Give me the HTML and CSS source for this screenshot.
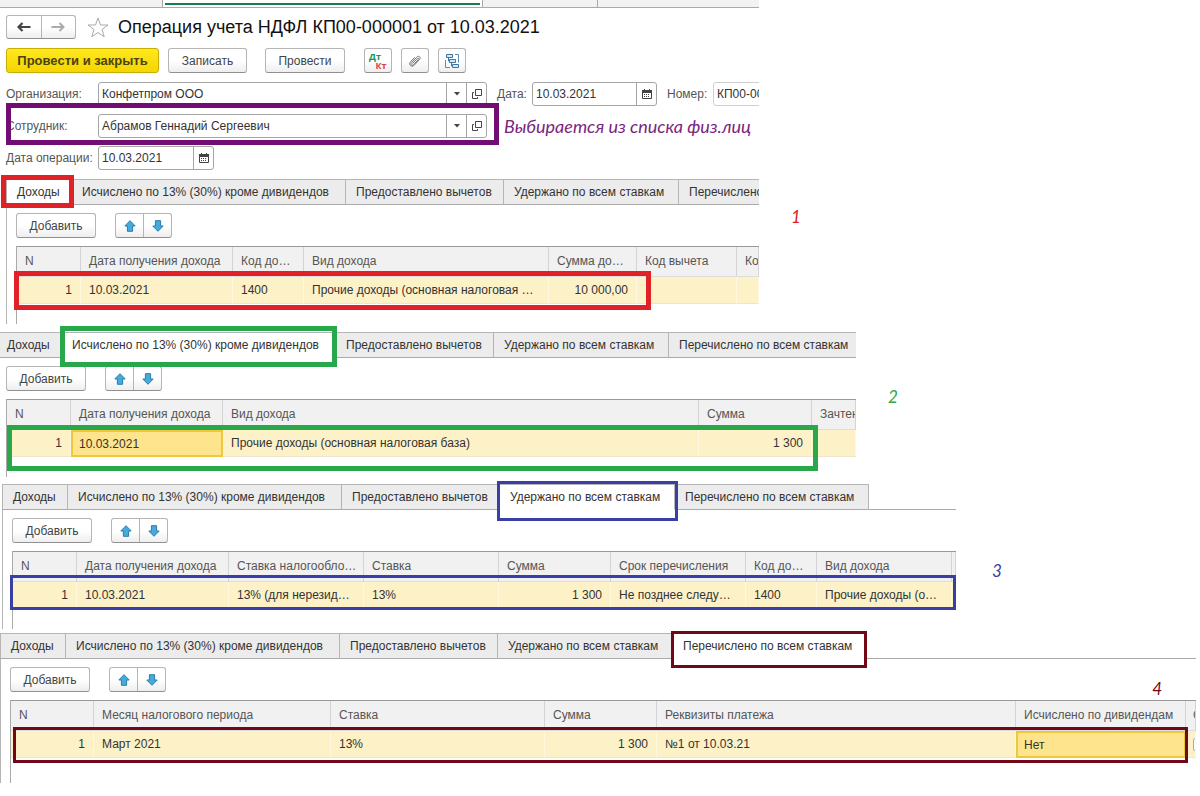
FILE: index.html
```html
<!DOCTYPE html>
<html lang="ru">
<head>
<meta charset="utf-8">
<title>Операция учета НДФЛ</title>
<link rel="stylesheet" href="styles.css">
</head>
<body>
<svg class="sprite" aria-hidden="true">
  <symbol id="up" viewBox="0 0 12 12"><path d="M6 .7 11.2 6H8.6v5.3H3.4V6H.8z" fill="#45abdf" stroke="#2b7ca8"/></symbol>
  <symbol id="down" viewBox="0 0 12 12"><path d="M6 11.3.8 6h2.6V.7h5.2V6h2.6z" fill="#45abdf" stroke="#2b7ca8"/></symbol>
  <symbol id="caret" viewBox="0 0 6 4"><path d="M0 0h6L3 3.5z" fill="#444"/></symbol>
  <symbol id="open" viewBox="0 0 10 10"><path d="M3.5.5h6v6h-6zM2 3.5H.5v6h5V8" fill="none" stroke="#444"/></symbol>
  <symbol id="cal" viewBox="0 0 10 10"><path d="M.5 1.5h9v8h-9z" fill="#fff" stroke="#444"/><path d="M0 1h10v3H0zM2 0h1v1H2zM7 0h1v1H7z" fill="#444"/><path d="M2 5h1v1H2zm2 0h1v1H4zm2 0h1v1H6zM2 7h1v1H2zm2 0h1v1H4zm2 0h1v1H6z" fill="#444"/></symbol>
</svg>

<header class="window">
  <div class="window-tabs"><span class="wt wt-first"></span><span class="wt wt-active"></span><span class="wt wt-next"></span><span class="wt wt-rest"></span></div>
  <div class="title-row">
    <div class="pair nav">
      <button type="button" aria-label="Назад"><svg width="14" height="10" viewBox="0 0 14 10"><path d="M5.5 1 1.5 5l4 4M2 5h11.500" fill="none" stroke="#444" stroke-width="2.200"/></svg></button>
      <button type="button" aria-label="Вперед"><svg width="14" height="10" viewBox="0 0 14 10"><path d="M8.500 1l4 4-4 4M12 5H.5" fill="none" stroke="#aaa" stroke-width="2"/></svg></button>
    </div>
    <svg class="star" width="22" height="21" viewBox="0 0 22 21"><path d="M11 1l2.500 7H21l-6 4.500 2.200 7.300L11 15.500l-6.200 4.300L7 12.500 1 8h7.500z" fill="#fff" stroke="#aaa"/></svg>
    <h1>Операция учета НДФЛ КП00-000001 от 10.03.2021</h1>
  </div>
  <div class="commands">
    <button type="button" class="btn primary">Провести и закрыть</button>
    <button type="button" class="btn save">Записать</button>
    <button type="button" class="btn post">Провести</button>
    <button type="button" class="btn square dtkt" aria-label="Дт Кт"><span class="dt">Дт</span><span class="kt">Кт</span></button>
    <button type="button" class="btn square" aria-label="Вложения"><svg width="14" height="14" viewBox="0 0 14 14"><path d="M4.500 9.500 9.300 4.500c.9-.9 1.900 0 1 1L5.600 10.600C4 12.200 2 10.300 3.500 8.700L8.600 3.200C10.800 1 13.400 3.300 11.500 5.500L6.300 11.200C3.800 13.700.2 10.800 2.300 8.100L6.600 3.400" fill="none" stroke="#777"/></svg></button>
    <button type="button" class="btn square" aria-label="Структура"><svg width="14" height="14" viewBox="0 0 14 14"><path d="M1.500.5h6v3h-6zM4.500 5.500h6v3h-6zM7.500 10.500h6v3h-6zM3.500 3.500V7h1M6.500 8.500V12h1" fill="#d5e8f4" stroke="#3a76a5"/><path d="M10 .5h3.500v8M.5 6v7.500H5" fill="none" stroke="#5b8db3"/></svg></button>
  </div>
  <div class="field-row">
    <label for="org">Организация:</label>
    <div class="field wide"><input id="org" value="Конфетпром ООО"><button type="button" aria-label="Список"><svg width="6" height="4"><use href="#caret"/></svg></button><button type="button" aria-label="Открыть"><svg width="10" height="10"><use href="#open"/></svg></button></div>
    <label class="inline date-label" for="date">Дата:</label>
    <div class="field date"><input id="date" value="10.03.2021"><button type="button" aria-label="Календарь"><svg width="10" height="10"><use href="#cal"/></svg></button></div>
    <label class="inline num-label" for="num">Номер:</label>
    <div class="field number"><input id="num" value="КП00-000001"></div>
  </div>
  <div class="field-row">
    <label for="emp">Сотрудник:</label>
    <div class="field wide"><input id="emp" value="Абрамов Геннадий Сергеевич"><button type="button" aria-label="Список"><svg width="6" height="4"><use href="#caret"/></svg></button><button type="button" aria-label="Открыть"><svg width="10" height="10"><use href="#open"/></svg></button></div>
    <span class="remark">Выбирается из списка физ.лиц</span>
    <span class="mark mark-employee"></span>
  </div>
  <div class="field-row">
    <label for="opdate">Дата операции:</label>
    <div class="field opdate"><input id="opdate" value="10.03.2021"><button type="button" aria-label="Календарь"><svg width="10" height="10"><use href="#cal"/></svg></button></div>
  </div>
</header>

<section class="step red">
  <div class="shot shot-1"><div class="panel">
    <div class="tabs" role="tablist">
      <button type="button" role="tab" class="active t1">Доходы</button><button type="button" role="tab" class="t2">Исчислено по 13% (30%) кроме дивидендов</button><button type="button" role="tab" class="t3">Предоставлено вычетов</button><button type="button" role="tab" class="t4">Удержано по всем ставкам</button><button type="button" role="tab" class="t5">Перечислено по всем ставкам</button>
    </div>
    <div class="content">
      <div class="tools"><button type="button" class="btn add">Добавить</button><div class="pair"><button type="button" aria-label="Вверх"><svg width="12" height="12"><use href="#up"/></svg></button><button type="button" aria-label="Вниз"><svg width="12" height="12"><use href="#down"/></svg></button></div></div>
      <div class="grid">
        <table>
          <colgroup><col class="w64"><col class="w152"><col class="w71"><col class="w245"><col class="w88"><col class="w100"><col></colgroup>
          <thead><tr><th>N</th><th>Дата получения дохода</th><th>Код до…</th><th>Вид дохода</th><th>Сумма до…</th><th>Код вычета</th><th class="cut">Код</th></tr></thead>
          <tbody><tr><td class="num">1</td><td>10.03.2021</td><td>1400</td><td>Прочие доходы (основная налоговая …</td><td class="num">10 000,00</td><td></td><td></td></tr></tbody>
        </table>
        <span class="mark mark-row"></span>
      </div>
    </div>
  </div></div>
  <span class="note">1</span>
</section>

<section class="step green">
  <div class="shot shot-2"><div class="panel">
    <div class="tabs" role="tablist">
      <button type="button" role="tab" class="t1">Доходы</button><button type="button" role="tab" class="active t2">Исчислено по 13% (30%) кроме дивидендов</button><button type="button" role="tab" class="t3">Предоставлено вычетов</button><button type="button" role="tab" class="t4">Удержано по всем ставкам</button><button type="button" role="tab" class="t5">Перечислено по всем ставкам</button>
    </div>
    <div class="content">
      <div class="tools"><button type="button" class="btn add">Добавить</button><div class="pair"><button type="button" aria-label="Вверх"><svg width="12" height="12"><use href="#up"/></svg></button><button type="button" aria-label="Вниз"><svg width="12" height="12"><use href="#down"/></svg></button></div></div>
      <div class="grid">
        <table>
          <colgroup><col class="w64"><col class="w152"><col class="w476"><col class="w113"><col></colgroup>
          <thead><tr><th>N</th><th>Дата получения дохода</th><th>Вид дохода</th><th>Сумма</th><th class="cut">Зачтено</th></tr></thead>
          <tbody><tr><td class="num">1</td><td class="current">10.03.2021</td><td>Прочие доходы (основная налоговая база)</td><td class="num">1 300</td><td></td></tr></tbody>
        </table>
        <span class="mark mark-row"></span>
      </div>
    </div>
  </div></div>
  <span class="note">2</span>
</section>

<section class="step blue">
  <div class="shot shot-3"><div class="panel">
    <div class="tabs" role="tablist">
      <button type="button" role="tab" class="t1">Доходы</button><button type="button" role="tab" class="t2">Исчислено по 13% (30%) кроме дивидендов</button><button type="button" role="tab" class="t3">Предоставлено вычетов</button><button type="button" role="tab" class="active t4">Удержано по всем ставкам</button><button type="button" role="tab" class="t5">Перечислено по всем ставкам</button>
    </div>
    <div class="content">
      <div class="tools"><button type="button" class="btn add">Добавить</button><div class="pair"><button type="button" aria-label="Вверх"><svg width="12" height="12"><use href="#up"/></svg></button><button type="button" aria-label="Вниз"><svg width="12" height="12"><use href="#down"/></svg></button></div></div>
      <div class="grid">
        <table>
          <colgroup><col class="w64"><col class="w152"><col class="w135"><col class="w135"><col class="w112"><col class="w135"><col class="w71"><col class="w135"><col></colgroup>
          <thead><tr><th>N</th><th>Дата получения дохода</th><th>Ставка налогообло…</th><th>Ставка</th><th>Сумма</th><th>Срок перечисления</th><th>Код до…</th><th>Вид дохода</th><th></th></tr></thead>
          <tbody><tr><td class="num">1</td><td>10.03.2021</td><td>13% (для нерезид…</td><td>13%</td><td class="num">1 300</td><td>Не позднее следу…</td><td>1400</td><td>Прочие доходы (о…</td><td></td></tr></tbody>
        </table>
        <span class="mark mark-row"></span>
      </div>
    </div>
  </div></div>
  <span class="note">3</span>
</section>

<section class="step maroon">
  <div class="shot shot-4"><div class="panel">
    <div class="tabs" role="tablist">
      <button type="button" role="tab" class="t1">Доходы</button><button type="button" role="tab" class="t2">Исчислено по 13% (30%) кроме дивидендов</button><button type="button" role="tab" class="t3">Предоставлено вычетов</button><button type="button" role="tab" class="t4">Удержано по всем ставкам</button><button type="button" role="tab" class="active t5">Перечислено по всем ставкам</button>
    </div>
    <div class="content">
      <div class="tools"><button type="button" class="btn add">Добавить</button><div class="pair"><button type="button" aria-label="Вверх"><svg width="12" height="12"><use href="#up"/></svg></button><button type="button" aria-label="Вниз"><svg width="12" height="12"><use href="#down"/></svg></button></div><span class="note">4</span></div>
      <div class="grid">
        <table>
          <colgroup><col class="w83"><col class="w237"><col class="w214"><col class="w112"><col class="w359"><col class="w170"><col></colgroup>
          <thead><tr><th>N</th><th>Месяц налогового периода</th><th>Ставка</th><th>Сумма</th><th>Реквизиты платежа</th><th>Исчислено по дивидендам</th><th class="cut">С</th></tr></thead>
          <tbody><tr><td class="num">1</td><td>Март 2021</td><td>13%</td><td class="num">1 300</td><td>№1 от 10.03.21</td><td class="current">Нет</td><td class="cut"><input type="checkbox" class="check" aria-label="С"></td></tr></tbody>
        </table>
        <span class="mark mark-row"></span>
      </div>
    </div>
  </div></div>
</section>
</body>
</html>
```
FILE: styles.css
```css
* { box-sizing: border-box; }

body {
  margin: 0;
  background: #fff;
  color: #333;
  font: 12px/16px "Liberation Sans", Arial, sans-serif;
}

button, input { font: inherit; color: inherit; }
.sprite { position: absolute; width: 0; height: 0; }

/* window header */
.window {
  max-width: 759px;
  padding-bottom: 9px;
  overflow-x: clip;
  display: flex;
  flex-direction: column;
}
.window-tabs { display: flex; height: 8px; flex: none; }
.wt { background: #f2f2f2; border-bottom: 1px solid #aaa; border-right: 1px solid #aaa; }
.wt-first { flex: 0 0 163px; }
.wt-active { flex: 0 0 320px; background: #fff; padding: 3px 2px 0; }
.wt-active::before { content: ""; display: block; height: 2px; background: #15804e; }
.wt-next { flex: 0 0 115px; }
.wt-rest { flex: 1; border-right: 0; }

.title-row { display: flex; align-items: center; padding: 7px 0 0 6px; height: 31px; flex: none; }
.star { margin: 0 9px 0 11px; flex: none; }
h1 { margin: 0; font-size: 18px; line-height: 24px; font-weight: 400; color: #111; white-space: nowrap; }

.btn, .pair {
  height: 25px;
  border: 1px solid #b5b5b5;
  border-bottom-color: #909090;
  border-radius: 3px;
  background: linear-gradient(#fff 50%, #eee);
  color: #444;
}
.btn { padding: 0; flex: none; }
.pair { display: flex; width: 57px; flex: none; }
.pair button { flex: 1; padding: 0; border: 0; background: none; display: flex; align-items: center; justify-content: center; }
.pair button + button { border-left: 1px solid #b5b5b5; }
.nav { width: 70px; height: 24px; }

.commands { display: flex; padding: 9px 0 0 6px; gap: 9px; flex: none; }
.primary { width: 153px; font-size: 13px; font-weight: 700; background: linear-gradient(#ffe81f, #f4d500); border-color: #c9ad00; color: #4b4310; }
.save { width: 79px; margin-right: 9px; }
.post { width: 80px; margin-right: 10px; }
.square { width: 28px; display: flex; align-items: center; justify-content: center; }
.dtkt { flex-direction: column; font: 700 9px/9px "Open Sans", sans-serif; }
.dt { color: #18935a; margin-right: 6px; }
.kt { color: #d8404a; margin-left: 6px; }

.field-row { position: relative; display: flex; align-items: center; height: 24px; margin-top: 8px; padding-left: 6px; flex: none; }
.commands + .field-row { margin-top: 9px; }
.field-row label { flex: 0 0 92px; color: #555; white-space: nowrap; }
.field-row .inline { flex: none; }
.field-row .date-label { width: 35px; margin-left: 10px; }
.field-row .num-label { width: 46px; margin-left: 10px; }
.field { display: flex; height: 24px; border: 1px solid #a5a5a5; border-radius: 3px; overflow: hidden; flex: none; }
.field input { flex: 1; min-width: 0; border: 0; padding: 0 3px; background: none; outline: 0; }
.field button { width: 20px; padding: 0; border: 0; border-left: 1px solid #a5a5a5; background: none; display: flex; align-items: center; justify-content: center; }
.wide { width: 389px; }
.date { width: 125px; }
.opdate { width: 116px; }
.number { width: 100px; border-color: #d0d0d0; }
.remark { margin-left: 17px; color: #7a2580; font: italic 18px/22px Lato, sans-serif; white-space: nowrap; }

/* coloured frames drawn over the forms */
.mark, .tabs .active::after { position: absolute; border: 5px solid var(--ink); pointer-events: none; }
.mark-employee { --ink: #720e73; left: 6px; top: -11px; width: 493px; height: 42px; }

/* steps */
.step { display: flex; margin-bottom: 8px; }
.red { --ink: #e02127; }
.green { --ink: #28a84a; margin-bottom: 7px; }
.blue { --ink: #3a3fa6; margin-bottom: 4px; }
.maroon { --ink: #710817; margin-bottom: 0; }
.note { color: var(--ink); font: italic 17px/22px Lato, sans-serif; }
.red > .note { margin: 27px 0 0 32px; }
.green > .note { margin: 54px 0 0 32px; }
.blue > .note { margin: 76px 0 0 36px; }
.tools .note { margin: 11px 34px 0 auto; }

.shot { overflow-x: clip; min-width: 0; }
.shot-1 { flex: 0 1 759px; padding-left: 6px; }
.shot-2 { flex: 0 1 856px; }
.shot-2 .panel { margin-left: -4px; }
.shot-3 { flex: 0 1 956px; padding-left: 2px; }
.shot-4 { flex: 0 1 1196px; }

.tabs { display: flex; height: 26px; border-bottom: 1px solid #aaa; }
.tabs button {
  position: relative;
  flex: none;
  height: 26px;
  padding: 0 0 0 10px;
  border: 1px solid #b5b5b5;
  border-left-width: 0;
  border-bottom-color: #aaa;
  background: #ececec;
  text-align: left;
  white-space: nowrap;
}
.tabs button:first-child { border-left-width: 1px; }
.t1 { width: 66px; }
.t2 { width: 274px; }
.t3 { width: 158px; }
.t4 { width: 175px; }
.t5 { width: 194px; }
.tabs .active { background: #fff; border-bottom-color: #fff; z-index: 1; }
.tabs .active::after { content: ""; inset: -5px -3px -4px -6px; }
.green .active::after { inset: -7px -2px -10px -2px; }
.blue .active::after { inset: -4px -4px -12px -3px; border-width: 3px; }
.maroon .active::after { inset: -3px -1px -10px -2px; border-width: 3px; }

.content { border-left: 1px solid #b5b5b5; padding: 8px 0 0 9px; }
.tools { display: flex; gap: 19px; height: 25px; }
.add { width: 80px; }

.grid { position: relative; margin-top: 8px; padding-bottom: 20px; border-left: 1px solid #aaa; }
.maroon .grid { padding-bottom: 25px; }
table { width: 100%; table-layout: fixed; border-collapse: separate; border-spacing: 0; border-top: 1px solid #999; }
th, td { padding: 0 4px 0 8px; text-align: left; font-weight: 400; overflow: hidden; text-overflow: ellipsis; white-space: nowrap; }
th { height: 30px; padding-bottom: 1px; background: #f1f1f1; color: #555; border-right: 1px solid #d4d4d4; border-bottom: 1px solid #ddd; }
td { height: 27px; background: #fdf1c8; border-right: 1px solid #fff8df; border-bottom: 1px solid #eee6cc; }
td.num { text-align: right; padding-right: 8px; }
th.cut, td.cut { text-overflow: clip; padding-right: 0; }
.maroon .cut { padding-left: 7px; }
td.current { background: #fee48c; border: 2px solid #ecc83a; padding-left: 6px; }
.check { appearance: none; width: 13px; height: 13px; margin: 0; border: 1px solid #aaa; border-radius: 2px; background: #fff; vertical-align: middle; }

.w64 { width: 64px; }
.w71 { width: 71px; }
.w83 { width: 83px; }
.w88 { width: 88px; }
.w100 { width: 100px; }
.w112 { width: 112px; }
.w113 { width: 113px; }
.w135 { width: 135px; }
.w152 { width: 152px; }
.w170 { width: 170px; }
.w214 { width: 214px; }
.w237 { width: 237px; }
.w245 { width: 245px; }
.w359 { width: 359px; }
.w476 { width: 476px; }

.red .mark-row { left: -3px; top: 25px; width: 637px; height: 39px; }
.green .mark-row { left: 0; top: 26px; width: 811px; height: 46px; }
.blue .mark-row { left: -3px; top: 24px; width: 946px; height: 35px; border-width: 3px; }
.maroon .mark-row { left: 2px; top: 27px; width: 1175px; height: 36px; border-width: 3px; }
```
